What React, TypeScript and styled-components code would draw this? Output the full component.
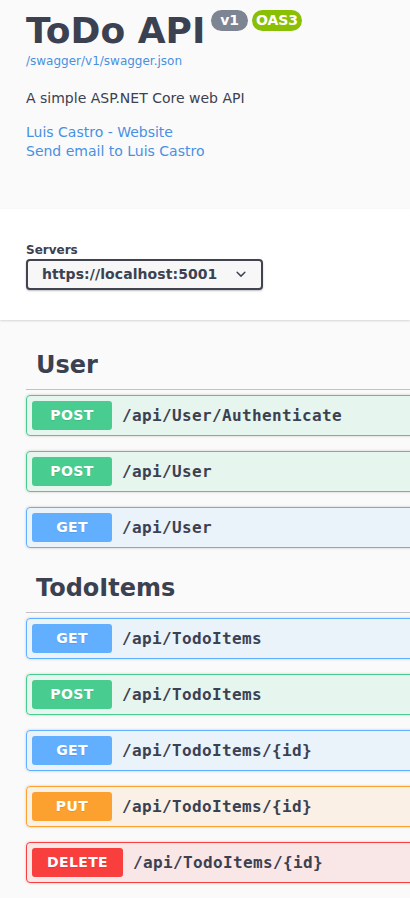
import React from "react";
import styled, { createGlobalStyle } from "styled-components";

const Global = createGlobalStyle`
  html, body { margin: 0; padding: 0; background: #fafafa; overflow: hidden; }
  body { font-family: "DejaVu Sans", sans-serif; color: #3b4151; }
  * { box-sizing: border-box; }
`;

const Page = styled.div`
  width: 100%;
  min-height: 898px;
  overflow: hidden;
  background: #fafafa;
`;

const Info = styled.section`
  height: 209px;
  padding: 10px 26px 0;
`;

const TitleRow = styled.div`
  display: flex;
  align-items: flex-start;
`;

const Title = styled.h2`
  margin: 0;
  font-size: 36px;
  line-height: 42px;
  font-weight: 700;
  color: #3b4151;
`;

const Badge = styled.small<{ $bg: string; $first?: boolean }>`
  display: inline-block;
  margin-left: ${(p) => (p.$first ? "6px" : "4px")};
  padding: 2px 4px;
  border-radius: 57px;
  background: ${(p) => p.$bg};
  color: #fff;
  font-size: 14px;
  line-height: 17px;
  font-weight: 700;
  white-space: pre;
`;

const SpecLink = styled.a`
  display: block;
  margin-top: 2px;
  font-size: 12px;
  line-height: 14px;
  color: #4990e2;
  text-decoration: none;
`;

const Description = styled.p`
  margin: 22px 0 0;
  font-size: 14px;
  line-height: 16px;
  color: #3b4151;
`;

const Contact = styled.div`
  margin-top: 17px;
  display: flex;
  flex-direction: column;
`;

const ContactLink = styled.a`
  font-size: 14px;
  line-height: 19px;
  color: #4990e2;
  text-decoration: none;
`;

const SchemeContainer = styled.section`
  background: #fff;
  box-shadow: 0 1px 2px 0 rgba(0, 0, 0, 0.15);
  padding: 30px 26px;
  margin-bottom: 20px;
`;

const ServersLabel = styled.div`
  margin-top: 4px;
  margin-bottom: 2px;
  font-size: 12px;
  line-height: 14px;
  font-weight: 700;
  color: #3b4151;
`;

const Select = styled.div`
  width: 237px;
  height: 31px;
  display: flex;
  align-items: center;
  justify-content: space-between;
  padding: 0 10px 2px 14px;
  border: 2px solid #41444e;
  border-radius: 4px;
  background: #f7f7f7;
  box-shadow: 0 1px 2px 0 rgba(0, 0, 0, 0.25);
  font-size: 14px;
  font-weight: 700;
  letter-spacing: 0.08px;
  color: #3b4151;
`;

const Chevron = styled.svg`
  width: 20px;
  height: 20px;
  margin-top: 1px;
  flex: none;
`;

const Operations = styled.div`
  width: 720px;
  padding-left: 26px;
`;

const TagSection = styled.section`
  padding-top: 1px;
`;

const TagTitle = styled.h3`
  margin: 0 0 5px;
  padding: 10px 20px 10px 10px;
  font-size: 24px;
  line-height: 28px;
  font-weight: 700;
  color: #3b4151;
  border-bottom: 1px solid rgba(59, 65, 81, 0.3);
`;

const methodColors: Record<string, string> = {
  GET: "97, 175, 254",
  POST: "73, 204, 144",
  PUT: "252, 161, 48",
  DELETE: "249, 62, 62",
};

const OpBlock = styled.div<{ $rgb: string }>`
  display: flex;
  align-items: center;
  padding: 5px;
  margin-bottom: 15px;
  border: 1px solid rgb(${(p) => p.$rgb});
  border-radius: 4px;
  background: rgba(${(p) => p.$rgb}, 0.1);
  box-shadow: 0 0 3px rgba(0, 0, 0, 0.19);
`;

const Method = styled.span<{ $rgb: string }>`
  min-width: 80px;
  padding: 6px 15px;
  border-radius: 3px;
  background: rgb(${(p) => p.$rgb});
  color: #fff;
  font-size: 14px;
  line-height: 17px;
  font-weight: 700;
  letter-spacing: 0.37px;
  text-align: center;
  text-shadow: 0 1px 0 rgba(0, 0, 0, 0.1);
`;

const Path = styled.span`
  padding: 0 10px;
  font-family: "DejaVu Sans Mono", monospace;
  font-size: 16px;
  font-weight: 700;
  letter-spacing: 0.37px;
  color: #3b4151;
`;

type Op = { method: string; path: string };

const tags: { name: string; ops: Op[] }[] = [
  {
    name: "User",
    ops: [
      { method: "POST", path: "/api/User/Authenticate" },
      { method: "POST", path: "/api/User" },
      { method: "GET", path: "/api/User" },
    ],
  },
  {
    name: "TodoItems",
    ops: [
      { method: "GET", path: "/api/TodoItems" },
      { method: "POST", path: "/api/TodoItems" },
      { method: "GET", path: "/api/TodoItems/{id}" },
      { method: "PUT", path: "/api/TodoItems/{id}" },
      { method: "DELETE", path: "/api/TodoItems/{id}" },
    ],
  },
];

export default function App() {
  return (
    <Page>
      <Global />
      <Info>
        <TitleRow>
          <Title>ToDo API</Title>
          <Badge $bg="#7d8492" $first>{" v1 "}</Badge>
          <Badge $bg="#89bf04">OAS3</Badge>
        </TitleRow>
        <SpecLink href="#">/swagger/v1/swagger.json</SpecLink>
        <Description>A simple ASP.NET Core web API</Description>
        <Contact>
          <ContactLink href="#">Luis Castro - Website</ContactLink>
          <ContactLink href="#">Send email to Luis Castro</ContactLink>
        </Contact>
      </Info>
      <SchemeContainer>
        <ServersLabel>Servers</ServersLabel>
        <Select>
          <span>https://localhost:5001</span>
          <Chevron viewBox="0 0 20 20">
            <path
              fill="#3b4151"
              d="M13.418 7.859a.695.695 0 01.978 0 .68.68 0 010 .969l-3.908 3.83a.697.697 0 01-.979 0l-3.908-3.83a.68.68 0 010-.969.695.695 0 01.978 0L10 11l3.418-3.141z"
            />
          </Chevron>
        </Select>
      </SchemeContainer>
      <Operations>
        {tags.map((t) => (
          <TagSection key={t.name}>
            <TagTitle>{t.name}</TagTitle>
            {t.ops.map((op, i) => (
              <OpBlock key={i} $rgb={methodColors[op.method]}>
                <Method $rgb={methodColors[op.method]}>{op.method}</Method>
                <Path>{op.path}</Path>
              </OpBlock>
            ))}
          </TagSection>
        ))}
      </Operations>
    </Page>
  );
}
